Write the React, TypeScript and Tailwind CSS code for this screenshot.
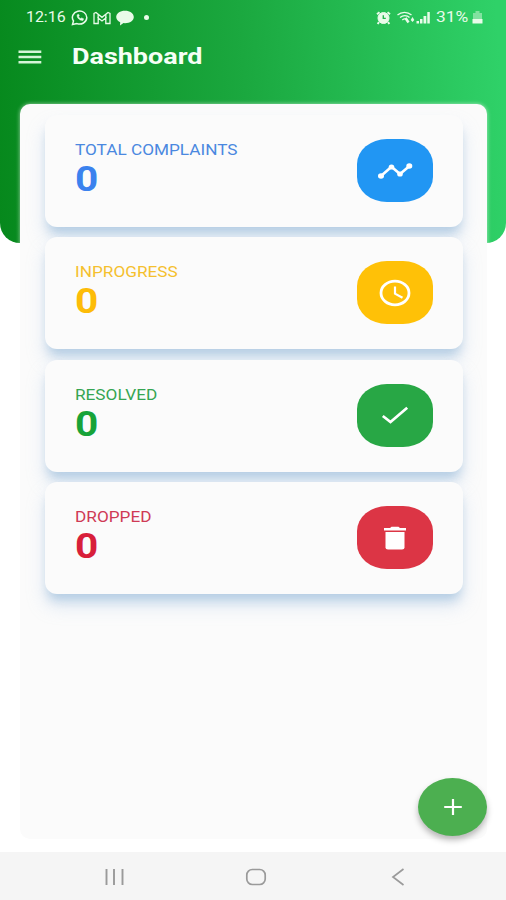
import React from "react";

function TimelineIcon() {
  return (
    <svg className="h-[18px] w-[36px]" viewBox="0 0 36 18" fill="none" stroke="currentColor" strokeWidth="2.6">
      <path d="m4 14 10.500-9.200L23 12l9.500-8" />
      <g fill="currentColor" stroke="none">
        <ellipse cx="4" cy="14" rx="3" ry="2.800" />
        <ellipse cx="14.500" cy="5" rx="2.800" ry="2.600" />
        <ellipse cx="23" cy="12" rx="2.800" ry="2.600" />
        <ellipse cx="32.300" cy="4" rx="3" ry="2.800" />
      </g>
    </svg>
  );
}

function ClockIcon() {
  return (
    <svg className="h-[28px] w-[34px]" viewBox="0 0 34 28" fill="none" stroke="currentColor" strokeWidth="2.800">
      <ellipse cx="17" cy="14" rx="14" ry="11.800" />
      <path d="M17 7.500v7.200l7.500 4" strokeWidth="2.200" />
    </svg>
  );
}

function CheckIcon() {
  return (
    <svg className="h-[20px] w-[30px]" viewBox="0 0 30 20" fill="none" stroke="currentColor" strokeWidth="2.700">
      <path d="m2.800 11 7.700 6L27.200 2.800" />
    </svg>
  );
}

function TrashIcon() {
  return (
    <svg className="h-[24px] w-[24px]" viewBox="0 0 24 24" fill="currentColor">
      <path d="M1 2h6l1.500-1.300h7L17 2h6v2.600H1Z" />
      <path d="M2.500 6h19v15.500q0 2-2.500 2H5q-2.500 0-2.500-2Z" />
    </svg>
  );
}

const stats = [
  { label: "TOTAL COMPLAINTS", value: 0, text: "text-[#4a88e0]", number: "text-[#3b82ee]", pill: "bg-[#2196f3]", Icon: TimelineIcon },
  { label: "INPROGRESS", value: 0, text: "text-[#f5c02e]", number: "text-[#fdbc08]", pill: "bg-[#ffc107]", Icon: ClockIcon },
  { label: "RESOLVED", value: 0, text: "text-[#35a552]", number: "text-[#17a338]", pill: "bg-[#28a745]", Icon: CheckIcon },
  { label: "DROPPED", value: 0, text: "text-[#cf3a55]", number: "text-[#d81f3a]", pill: "bg-[#dc3545]", Icon: TrashIcon },
];

function StatusBar() {
  return (
    <div className="flex h-[35px] items-center justify-between pl-[26px] pr-[22px] text-[#e8fbe9]">
      <div className="flex items-center">
        <div className="w-[45px] text-[15px] leading-none">
          <span className="inline-block origin-left scale-x-[1.06]">12:16</span>
        </div>
        <svg className="h-4 w-[18px]" viewBox="0 0 18 16" fill="none" stroke="currentColor">
          <path d="M1.500 14.500 2.500 11A7.200 6.500 0 1 1 6 13.600Z" strokeWidth="1.500" />
          <path d="M6.200 4.800c-.7 3 2.500 6 5.800 5.600l.6-1.600-2-.9-.8.700c-1-.3-1.800-1-2.200-1.900l.7-.9-.7-1.500Z" fill="currentColor" strokeWidth=".5" />
        </svg>
        <svg className="ml-[4px] h-[14px] w-[18px]" viewBox="0 0 18 14" fill="none" stroke="currentColor" strokeWidth="1.300">
          <path d="M1 12.500v-10L3 1.500l6 4.800 6-4.800 2 1v10h-4.200V7L9 10 5.200 7v5.500Z" />
          <path d="M5.200 3.500V7M12.800 3.500V7" />
        </svg>
        <svg className="ml-[4px] h-4 w-[20px]" viewBox="0 0 20 16" fill="currentColor">
          <path d="M10 .8c5 0 8.800 2.600 8.800 6.200s-3.800 6.200-8.800 6.200l-1.500-.1-3.500 2.400.2-3.300C2.800 11 1.200 9.200 1.200 7 1.200 3.400 5 .8 10 .8Z" />
        </svg>
        <span className="ml-[9px] size-[5px] rounded-full bg-current" />
      </div>
      <div className="flex items-center">
        <svg className="h-[14px] w-[15px]" viewBox="0 0 15 14" stroke="currentColor">
          <path d="m1 3.200 2.500-2M14 3.200l-2.500-2M3 11l-1.300 2M12 11l1.300 2" strokeWidth="2" />
          <ellipse cx="7.500" cy="7" rx="5.500" ry="5.500" fill="currentColor" />
          <path d="M7.300 4.200v3.200h2.500" fill="none" stroke="#22b64b" strokeWidth="1.400" />
        </svg>
        <svg className="ml-[5px] h-[13px] w-[20px]" viewBox="0 0 20 13" fill="none" stroke="currentColor" strokeWidth="1.300">
          <path d="M1.500 4c4-3.600 10-3.600 14 0M4 6.500c3-2.500 7-2.500 9.500 0M6.300 9c1.500-1.300 3.500-1.300 5 0" />
          <path d="m9.500 7 3 4.500" strokeWidth="2.500" />
          <path d="m16.500 6 1.800 3-1.800 2-1.800-2Z" fill="currentColor" stroke="none" />
        </svg>
        <svg className="h-[13px] w-[15px]" viewBox="0 0 15 13" fill="currentColor">
          <path d="M.5 10h2.500v2.500H.5ZM4 8h2.500v4.500H4ZM7.500 5h2.800v7.500H7.500ZM11.300 1h2.500v11.500h-2.500Z" />
        </svg>
        <div className="ml-[5px] w-[36px] text-[15px] leading-none">
          <span className="inline-block origin-left scale-x-[1.16]">31%</span>
        </div>
        <svg className="mr-px h-[13px] w-[11px]" viewBox="0 0 11 13" fill="currentColor">
          <path d="M3.500 0h4v2H10v6H1V2h2.500Z" opacity=".45" />
          <path d="M.5 8h10v4.500H.5Z" />
        </svg>
      </div>
    </div>
  );
}

export default function App() {
  return (
    <div className="flex h-[900px] w-[506px] flex-col overflow-hidden bg-white font-[Roboto,sans-serif]">
      <header className="-mb-[139px] h-[243px] shrink-0 rounded-b-[20px] bg-[linear-gradient(86deg,#06881c_0%,#1ba83f_49%,#2fd168_98%)]">
        <StatusBar />
        <div className="flex h-[44px] items-center pl-[18px]">
          <svg className="h-[14px] w-[24px]" viewBox="0 0 24 14" fill="none" stroke="#d5f5d8" strokeWidth="2.400">
            <path d="M.5 1.800h22.800M.5 7h22.800M.5 12.200h22.800" />
          </svg>
          <h1 className="ml-[30px] origin-left scale-x-[1.225] text-[22px] font-bold leading-none text-[#f6fff6]">Dashboard</h1>
        </div>
      </header>

      <main className="relative mx-[20px] h-[735px] w-[467px] shrink-0 rounded-[10px] bg-[#fbfbfb] pl-[25px] pr-[24px] pt-[11px] shadow-[0_0_4px_rgba(255,255,255,0.6)]">
        <div className="flex flex-col gap-[10.400px]">
          {stats.map(({ label, value, text, number, pill, Icon }) => (
            <section
              key={label}
              className="flex h-[112px] items-start justify-between rounded-[12px] bg-[#fbfbfb] px-[30px] pt-[24px] shadow-[0_9px_10px_-3px_rgba(140,178,212,0.48),0_12px_18px_rgba(165,198,230,0.36)]"
            >
              <div className="flex flex-col items-start pt-[3px]">
                <span className={"origin-left scale-x-[1.228] text-[14px] leading-[17px] " + text}>{label}</span>
                <span className={"mt-[4px] origin-left scale-x-[1.16] text-[35px] font-bold leading-[34px] " + number}>{value}</span>
              </div>
              <div className={"flex h-[63px] w-[76px] items-center justify-center rounded-[30px/25px] text-white " + pill}>
                <Icon />
              </div>
            </section>
          ))}
        </div>
        <button className="absolute left-[398px] top-[674px] flex h-[58px] w-[69px] items-center justify-center rounded-[50%] bg-[#4caf50] text-white shadow-[0_4px_6px_rgba(0,0,0,0.28)]">
          <svg className="h-[18px] w-[20px]" viewBox="0 0 20 18" stroke="currentColor" strokeWidth="2.200">
            <path d="M1.200 9h17.600M10 1v16" />
          </svg>
        </button>
      </main>

      <nav className="mt-auto flex h-[48px] shrink-0 items-center bg-[#f5f5f5] pt-[2px] text-[#9a9a9a]">
        <svg className="ml-[104px] h-[18px] w-[20px]" viewBox="0 0 20 18" stroke="currentColor" strokeWidth="1.900">
          <path d="M2.500 1v16M10 1v16M18.500 1v16" />
        </svg>
        <svg className="ml-[121px] h-[18px] w-[22px]" viewBox="0 0 22 18" fill="none" stroke="currentColor" strokeWidth="1.700">
          <rect x="1.800" y="1.500" width="18.400" height="15" rx="5.500" />
        </svg>
        <svg className="ml-[124px] h-[18px] w-[14px]" viewBox="0 0 14 18" fill="none" stroke="currentColor" strokeWidth="1.700">
          <path d="M12.500 1 2 9l10.500 8" />
        </svg>
      </nav>
    </div>
  );
}
